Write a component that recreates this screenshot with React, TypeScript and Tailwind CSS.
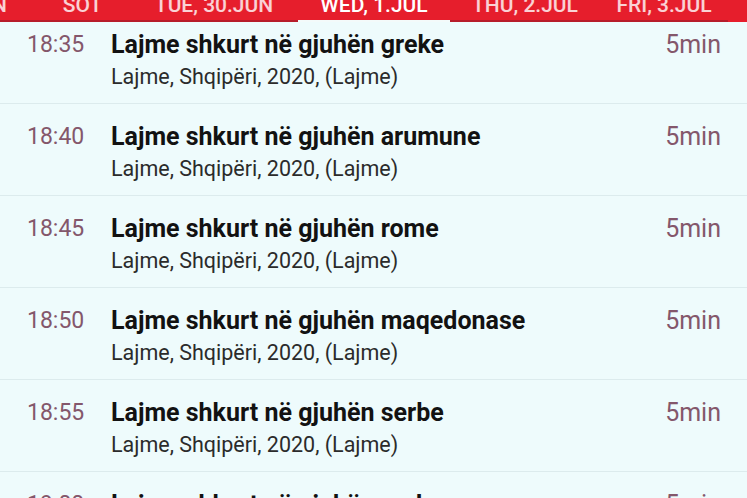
const tabs = [
  { label: "MON, 29.JUN", w: "w-[150px]", first: true },
  { label: "SOT", w: "w-[95px]" },
  { label: "TUE, 30.JUN", w: "w-[168px]" },
  { label: "WED, 1.JUL", w: "w-[152px]", active: true },
  { label: "THU, 2.JUL", w: "w-[150px]" },
  { label: "FRI, 3.JUL", w: "w-[128px]" },
];

const shows = [
  { time: "18:35", lang: "greke" },
  { time: "18:40", lang: "arumune" },
  { time: "18:45", lang: "rome" },
  { time: "18:50", lang: "maqedonase" },
  { time: "18:55", lang: "serbe" },
  { time: "19:00", lang: "malazeze" },
];

export default function App() {
  return (
    <div className="w-[747px] h-[498px] overflow-hidden bg-[#eefbfc] font-['Roboto',_'Liberation_Sans',_sans-serif] flex flex-col">
      {/* Day tabs */}
      <div className="h-[22px] shrink-0 bg-[#e61e2c] flex overflow-hidden">
        <div className="flex -ml-[115px]">
          {tabs.map((t) => (
            <div
              key={t.label}
              className={`${t.w} shrink-0 flex items-start border-b-2 ${
                t.first ? "justify-end pr-[28px]" : "justify-center"
              } ${t.active ? "border-[#f3fafa] text-white" : "border-[#b71d2b] text-white/80"}`}
            >
              <span className="-mt-[5px] text-[21px] font-medium leading-none whitespace-nowrap">
                {t.label}
              </span>
            </div>
          ))}
        </div>
      </div>

      {/* Schedule list */}
      <div className="flex-1 overflow-hidden">
        <div className="-mt-[10px]">
          {shows.map((s) => (
            <div
              key={s.time}
              className="h-[92px] border-b border-[#dcebed] flex pl-[27px] pr-[26px] pt-[18px]"
            >
              <div className="w-[84px] shrink-0 text-[23px] leading-[30px] text-[#84576b]">
                {s.time}
              </div>
              <div className="flex-1 flex flex-col gap-[4px]">
                <div className="text-[25px] leading-[30px] font-bold text-[#121212]">
                  Lajme shkurt në gjuhën {s.lang}
                </div>
                <div className="text-[21.5px] leading-[26px] text-[#2b2b2b]">
                  Lajme, Shqipëri, 2020, (Lajme)
                </div>
              </div>
              <div className="text-[25px] leading-[30px] text-[#84576b]">5min</div>
            </div>
          ))}
        </div>
      </div>
    </div>
  );
}
